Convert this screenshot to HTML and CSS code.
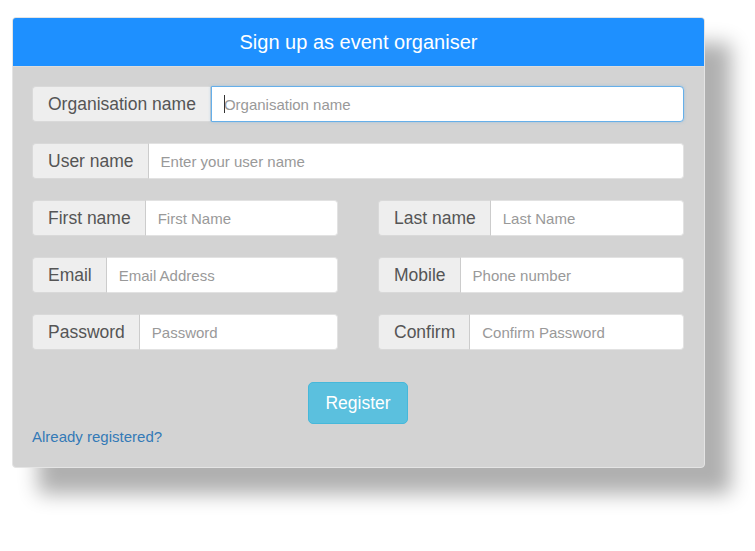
FILE: index.html
```html
<!DOCTYPE html>
<html>
<head>
<meta charset="utf-8">
<link rel="stylesheet" href="styles.css">
</head>
<body>
<div class="panel">
  <div class="panel-heading">Sign up as event organiser</div>
  <div class="panel-body">
    <div class="rows">
      <div class="group">
        <span class="addon">Organisation name</span>
        <div class="field">
          <input class="input focused" type="text" placeholder="Organisation name">
          <span class="caret"></span>
        </div>
      </div>
      <div class="group">
        <span class="addon">User name</span>
        <input class="input" type="text" placeholder="Enter your user name">
      </div>
      <div class="pair">
        <div class="group">
          <span class="addon">First name</span>
          <input class="input" type="text" placeholder="First Name">
        </div>
        <div class="group">
          <span class="addon">Last name</span>
          <input class="input" type="text" placeholder="Last Name">
        </div>
      </div>
      <div class="pair">
        <div class="group">
          <span class="addon">Email</span>
          <input class="input" type="text" placeholder="Email Address">
        </div>
        <div class="group">
          <span class="addon">Mobile</span>
          <input class="input" type="text" placeholder="Phone number">
        </div>
      </div>
      <div class="pair">
        <div class="group">
          <span class="addon">Password</span>
          <input class="input" type="password" placeholder="Password">
        </div>
        <div class="group">
          <span class="addon">Confirm</span>
          <input class="input" type="password" placeholder="Confirm Password">
        </div>
      </div>
    </div>
    <div class="actions">
      <button class="btn" type="button">Register</button>
    </div>
    <a class="link" href="#">Already registered?</a>
  </div>
</div>
</body>
</html>
```

FILE: styles.css
```css
* { box-sizing: border-box; }
html, body { margin: 0; padding: 0; background: #fff; }
body {
  font-family: "Liberation Sans", Arial, sans-serif;
  min-height: 551px;
  padding: 17px 0 60px 12px;
}

.panel {
  width: 693px;
  border: 1px solid #e4e4e4;
  border-radius: 4px;
  background: #d3d3d3;
  box-shadow: 26px 26px 20px #b0b0b0;
  overflow: hidden;
}

.panel-heading {
  height: 49px;
  background: #1e90ff;
  color: #fff;
  font-size: 20px;
  text-align: center;
  line-height: 48px;
  border-bottom: 1px solid #dcdcdc;
}

.panel-body {
  padding: 19px 20px 20px 19px;
}

.rows {
  display: flex;
  flex-direction: column;
  gap: 21px;
}

.pair {
  display: grid;
  grid-template-columns: minmax(0, 1fr) minmax(0, 1fr);
  column-gap: 40px;
}

.group {
  display: flex;
  height: 36px;
  min-width: 0;
}

.addon {
  flex: none;
  display: flex;
  align-items: center;
  padding: 0 14px 0 15px;
  background: #eee;
  color: #555;
  font-size: 17.5px;
  border: 1px solid #d9d9d9;
  border-right: 1px solid #ccc;
  border-radius: 4px 0 0 4px;
}

.field {
  flex: 1;
  min-width: 0;
  position: relative;
  display: flex;
}

.input {
  flex: 1;
  min-width: 0;
  width: 0;
  height: 36px;
  margin: 0;
  padding: 0 12px;
  font-family: "Liberation Sans", Arial, sans-serif;
  font-size: 15px;
  color: #555;
  background: #fff;
  border: 1px solid #e2e2e2;
  border-left: none;
  border-radius: 0 4px 4px 0;
  outline: none;
}

.input::placeholder { color: #999; opacity: 1; }

.input.focused {
  border: 1px solid #66afe9;
  box-shadow: 0 0 3px rgba(102, 175, 233, 0.5);
}

.caret {
  position: absolute;
  left: 13px;
  top: 9px;
  width: 1px;
  height: 18px;
  background: #333;
}

.actions {
  display: flex;
  justify-content: center;
  margin-top: 32px;
}

.btn {
  height: 42px;
  padding: 0 16px;
  font-family: "Liberation Sans", Arial, sans-serif;
  font-size: 17.5px;
  color: #fff;
  background: #5bc0de;
  border: 1px solid #46b8da;
  border-radius: 5px;
}

.link {
  display: inline-block;
  margin-top: 3px;
  font-size: 15px;
  line-height: 20px;
  color: #337ab7;
  text-decoration: none;
}
```
